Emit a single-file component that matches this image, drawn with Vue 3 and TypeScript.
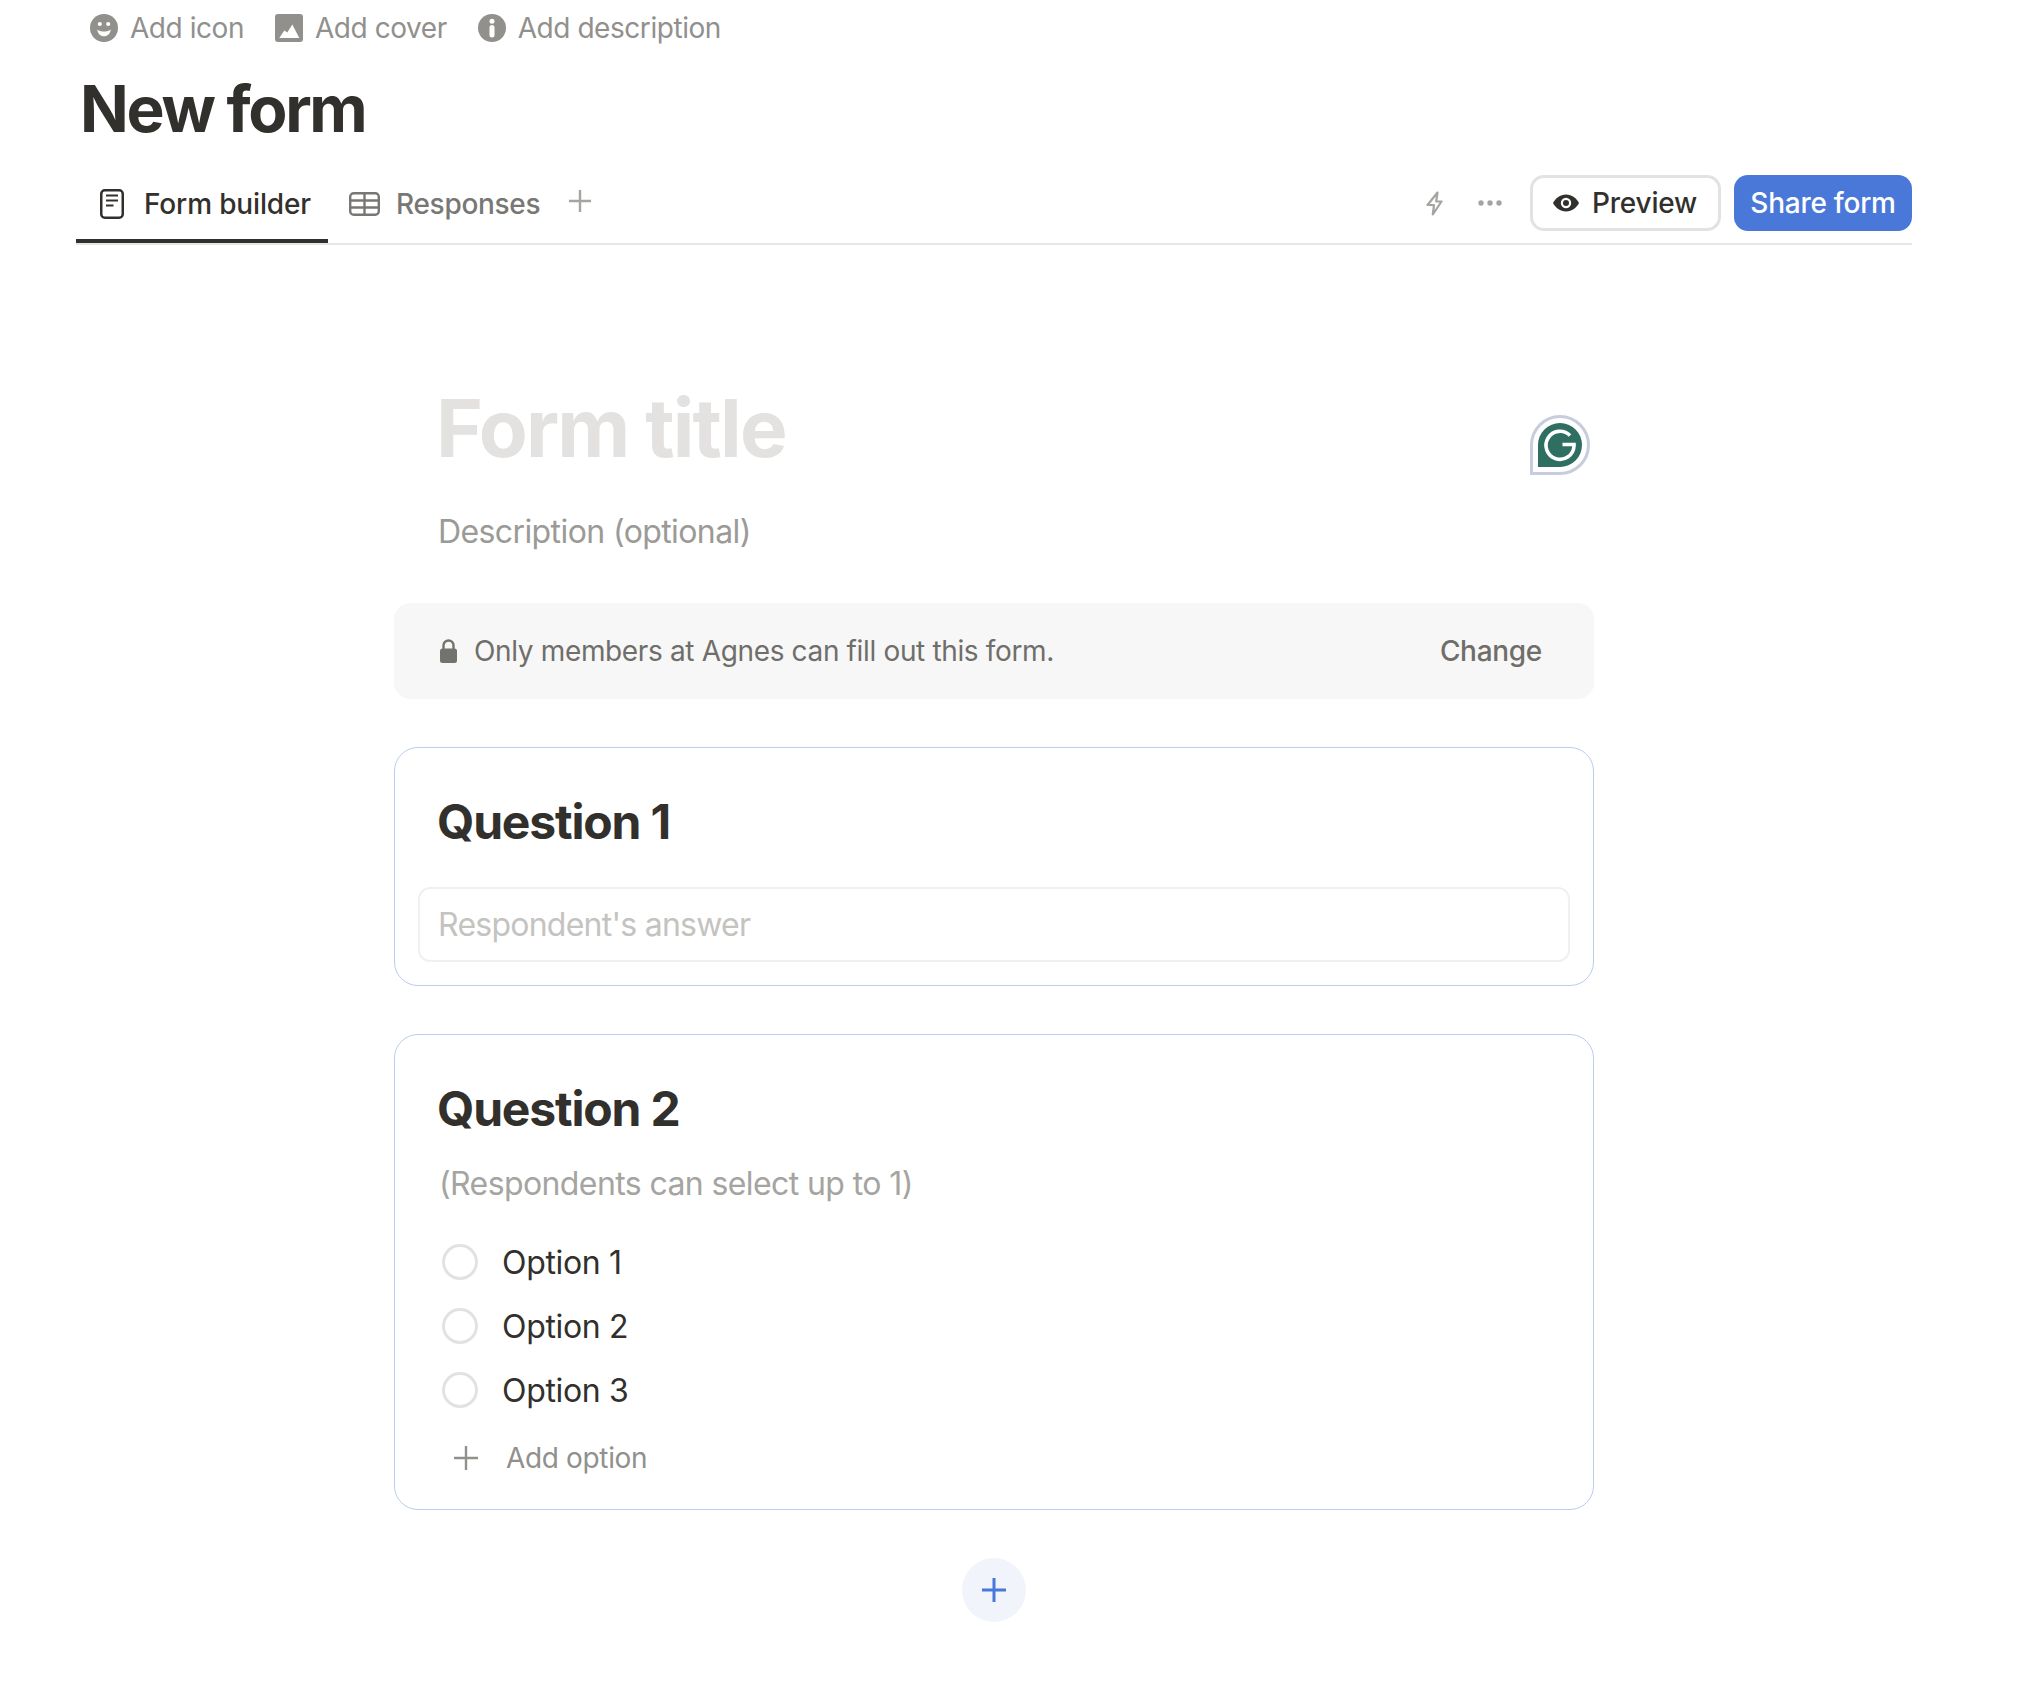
<script setup lang="ts">
const options: string[] = ['Option 1', 'Option 2', 'Option 3']
</script>

<template>
  <div class="page">
    <div class="meta">
      <span class="meta-item">
        <svg class="meta-icon" viewBox="0 0 28 28">
          <circle cx="14" cy="14" r="14" fill="#91908d" />
          <circle cx="9.800" cy="10" r="2.100" fill="#fff" />
          <circle cx="18.200" cy="10" r="2.100" fill="#fff" />
          <path d="M7.200 15.500C9 17 11.500 17.500 14 17.500S19 17 20.800 15.500C20.300 19.500 17.500 22.300 14 22.300S7.700 19.500 7.200 15.500z" fill="#fff" />
        </svg>
        Add icon
      </span>
      <span class="meta-item">
        <svg class="meta-icon" viewBox="0 0 28 28">
          <rect width="28" height="28" rx="3" fill="#91908d" />
          <path d="M4.300 24l5-7.500 3 2 5-8 7 13.500z" fill="#fff" />
        </svg>
        Add cover
      </span>
      <span class="meta-item">
        <svg class="meta-icon" viewBox="0 0 28 28">
          <circle cx="14" cy="14" r="14" fill="#91908d" />
          <circle cx="14" cy="7.200" r="2.500" fill="#fff" />
          <rect x="11.500" y="11" width="5" height="12.500" rx="2.500" fill="#fff" />
        </svg>
        Add description
      </span>
    </div>

    <h1 class="page-title">New form</h1>

    <div class="tabbar">
      <div class="tab tab-active">
        <svg class="tab-doc" viewBox="0 0 24 30" fill="none" stroke="#32302c">
          <rect x="1.250" y="1.250" width="21.500" height="27.500" rx="3.500" stroke-width="2.500" />
          <path d="M6 6.500h12M6 11.500h12M6 16.500h7.500" stroke-width="2" />
        </svg>
        <span>Form builder</span>
      </div>
      <div class="tab tab-plain">
        <svg class="tab-table" viewBox="0 0 31 24" fill="none" stroke="#787774" stroke-width="2.400">
          <rect x="1.200" y="1.200" width="28.600" height="21.600" rx="3.500" />
          <path d="M1.200 8.500h28.600M1.200 15.500h28.600M15.500 1.200v21.600" />
        </svg>
        <span>Responses</span>
      </div>
      <svg class="tab-plus" viewBox="0 0 22 22" stroke="#a5a4a1" stroke-width="2.400">
        <path d="M11 0v22M0 11h22" />
      </svg>

      <div class="actions">
        <svg class="bolt" viewBox="0 0 17 25" fill="none" stroke="#a5a4a1" stroke-width="2.200" stroke-linejoin="round">
          <path d="M11.500 1.500L1.500 14H8L6.800 23.500L15.500 10.500H10.200z" />
        </svg>
        <svg class="dots" viewBox="0 0 24 6" fill="#a5a4a1">
          <circle cx="3" cy="3" r="2.700" />
          <circle cx="12" cy="3" r="2.700" />
          <circle cx="21" cy="3" r="2.700" />
        </svg>
        <button class="btn btn-preview">
          <svg class="eye" viewBox="0 0 26 18">
            <path d="M13 0.500C7 0.500 2.500 4.500 0 9c2.500 4.500 7 8.500 13 8.500S23.500 13.500 26 9C23.500 4.500 19 0.500 13 0.500z" fill="#32302c" />
            <circle cx="13" cy="9" r="5.200" fill="#fff" />
            <circle cx="13" cy="9" r="3" fill="#32302c" />
          </svg>
          Preview
        </button>
        <button class="btn btn-share">Share form</button>
      </div>
    </div>

    <main class="form">
      <svg class="grammarly" viewBox="0 0 60 60">
        <path d="M1.500 58.500V30A28.500 28.500 0 1 1 30 58.500z" fill="#fff" stroke="#c9ccdc" stroke-width="3" />
        <path d="M8 52V30A22 22 0 1 1 30 52z" fill="#2f6f62" />
        <path d="M40 20.500A14 14 0 1 0 44 31V29.500H32.500" fill="none" stroke="#fff" stroke-width="3.600" />
      </svg>

      <div class="form-title">Form title</div>
      <div class="form-desc">Description (optional)</div>

      <div class="banner">
        <svg class="lock" viewBox="0 0 17 24">
          <path d="M3.500 11V6.500a5 5 0 0 1 10 0V11" fill="none" stroke="#73726e" stroke-width="2.400" />
          <rect y="9.500" width="17" height="14.500" rx="2.500" fill="#73726e" />
        </svg>
        <span class="banner-text">Only members at Agnes can fill out this form.</span>
        <span class="banner-change">Change</span>
      </div>

      <section class="card">
        <h2 class="q-title">Question 1</h2>
        <div class="answer">Respondent's answer</div>
      </section>

      <section class="card card-two">
        <h2 class="q-title">Question 2</h2>
        <div class="q-hint">(Respondents can select up to 1)</div>
        <div class="opts">
          <div v-for="o in options" :key="o" class="opt">
            <span class="radio"></span>
            <span>{{ o }}</span>
          </div>
        </div>
        <div class="add-opt">
          <svg class="add-plus" viewBox="0 0 24 24" stroke="#91908d" stroke-width="2.400">
            <path d="M12 0v24M0 12h24" />
          </svg>
          <span>Add option</span>
        </div>
      </section>

      <button class="fab">
        <svg class="fab-plus" viewBox="0 0 24 24" stroke="#4a78d8" stroke-width="3">
          <path d="M12 0v24M0 12h24" />
        </svg>
      </button>
    </main>
  </div>
</template>

<style>
html, body { margin: 0; background: #fff; }
</style>

<style scoped>
.page {
  width: 2044px;
  height: 1682px;
  box-sizing: border-box;
  overflow: hidden;
  padding-left: 76px;
  font-family: Inter, "Liberation Sans", sans-serif;
  color: #32302c;
  background: #fff;
}
svg { display: block; flex: none; }

.meta {
  height: 56px;
  display: flex;
  align-items: center;
  gap: 31px;
  padding-left: 14px;
}
.meta-item {
  display: flex;
  align-items: center;
  gap: 12px;
  font-size: 28px;
  letter-spacing: -0.45px;
  color: #91908d;
}
.meta-icon { width: 28px; height: 28px; }

.page-title {
  margin: 13px 0 0 4px;
  font-size: 64px;
  line-height: 80px;
  font-weight: 700;
  letter-spacing: -2.3px;
}

.tabbar {
  width: 1836px;
  height: 70px;
  box-sizing: border-box;
  margin-top: 26px;
  display: flex;
  align-items: flex-start;
  border-bottom: 2px solid #e6e6e5;
}
.tab {
  height: 68px;
  box-sizing: border-box;
  display: flex;
  align-items: center;
  font-size: 28px;
  font-weight: 500;
  padding-bottom: 10px;
}
.tab-active {
  width: 252px;
  padding-left: 24px;
  gap: 20px;
  border-bottom: 4px solid #32302c;
  padding-bottom: 6px;
  letter-spacing: -0.15px;
}
.tab-plain {
  padding-left: 21px;
  gap: 16px;
  color: #787774;
  letter-spacing: -0.3px;
}
.tab-doc { width: 24px; height: 30px; }
.tab-table { width: 31px; height: 24px; }
.tab-plus { width: 22px; height: 22px; margin: 15px 0 0 29px; }

.actions {
  margin-left: auto;
  height: 56px;
  display: flex;
  align-items: center;
}
.bolt { width: 17px; height: 25px; }
.dots { width: 24px; height: 6px; margin: 0 28px 0 35px; }
.btn {
  height: 56px;
  box-sizing: border-box;
  display: flex;
  align-items: center;
  border-radius: 14px;
  font-family: inherit;
  font-size: 28px;
  font-weight: 500;
  padding: 0;
}
.btn-preview {
  width: 191px;
  gap: 13px;
  padding-left: 20px;
  background: #fff;
  color: #32302c;
  border: 3px solid #e3e2e0;
  letter-spacing: -0.2px;
}
.eye { width: 26px; height: 18px; }
.btn-share {
  width: 178px;
  margin-left: 13px;
  justify-content: center;
  background: #4a78d8;
  color: #fff;
  border: 0;
  letter-spacing: -0.25px;
}

.form {
  position: relative;
  width: 1200px;
  margin-left: 318px;
  display: flex;
  flex-direction: column;
}
.grammarly {
  position: absolute;
  left: 1136px;
  top: 170px;
  width: 60px;
  height: 60px;
}
.form-title {
  margin: 133px 0 0 42px;
  font-size: 80px;
  line-height: 100px;
  font-weight: 700;
  letter-spacing: -1.9px;
  color: #e3e2e0;
}
.form-desc {
  margin: 32px 0 0 44px;
  font-size: 32px;
  line-height: 44px;
  letter-spacing: -0.6px;
  color: #9b9a97;
}
.banner {
  height: 96px;
  margin-top: 49px;
  box-sizing: border-box;
  display: flex;
  align-items: center;
  padding: 0 52px 0 46px;
  background: #f7f7f7;
  border-radius: 16px;
  font-size: 28px;
  color: #6f6e6a;
}
.lock { width: 17px; height: 24px; }
.banner-text { margin-left: 17px; letter-spacing: -0.35px; }
.banner-change { margin-left: auto; font-weight: 500; letter-spacing: -0.3px; }

.card {
  margin-top: 48px;
  height: 239px;
  box-sizing: border-box;
  padding: 44px 24px 0;
  border: 1px solid #b9cdf0;
  border-radius: 24px;
}
.card-two { height: 476px; }
.q-title {
  margin: 0 0 0 18px;
  font-size: 48px;
  line-height: 60px;
  font-weight: 700;
  letter-spacing: -1.15px;
}
.answer {
  height: 75px;
  margin: 35px -1px 0;
  box-sizing: border-box;
  display: flex;
  align-items: center;
  padding-left: 18px;
  border: 2px solid #f0f0ef;
  border-radius: 12px;
  font-size: 32px;
  letter-spacing: -0.75px;
  color: #c4c3c0;
}
.q-hint {
  margin: 25px 0 0 20px;
  font-size: 32px;
  line-height: 40px;
  letter-spacing: -0.6px;
  color: #a5a4a1;
}
.opts { margin-top: 26px; }
.opt {
  height: 64px;
  display: flex;
  align-items: center;
  gap: 24px;
  padding-left: 23px;
  font-size: 32px;
  letter-spacing: -0.33px;
  color: #32302c;
}
.radio {
  width: 36px;
  height: 36px;
  box-sizing: border-box;
  border: 3px solid #e3e2e0;
  border-radius: 50%;
}
.add-opt {
  height: 48px;
  margin-top: 12px;
  display: flex;
  align-items: center;
  gap: 28px;
  padding-left: 35px;
  font-size: 28px;
  letter-spacing: -0.35px;
  color: #91908d;
}
.add-plus { width: 24px; height: 24px; }
.fab {
  width: 64px;
  height: 64px;
  margin: 48px auto 0;
  padding: 0;
  display: flex;
  align-items: center;
  justify-content: center;
  border: 0;
  border-radius: 50%;
  background: #f1f4fb;
}
.fab-plus { width: 24px; height: 24px; }
</style>
